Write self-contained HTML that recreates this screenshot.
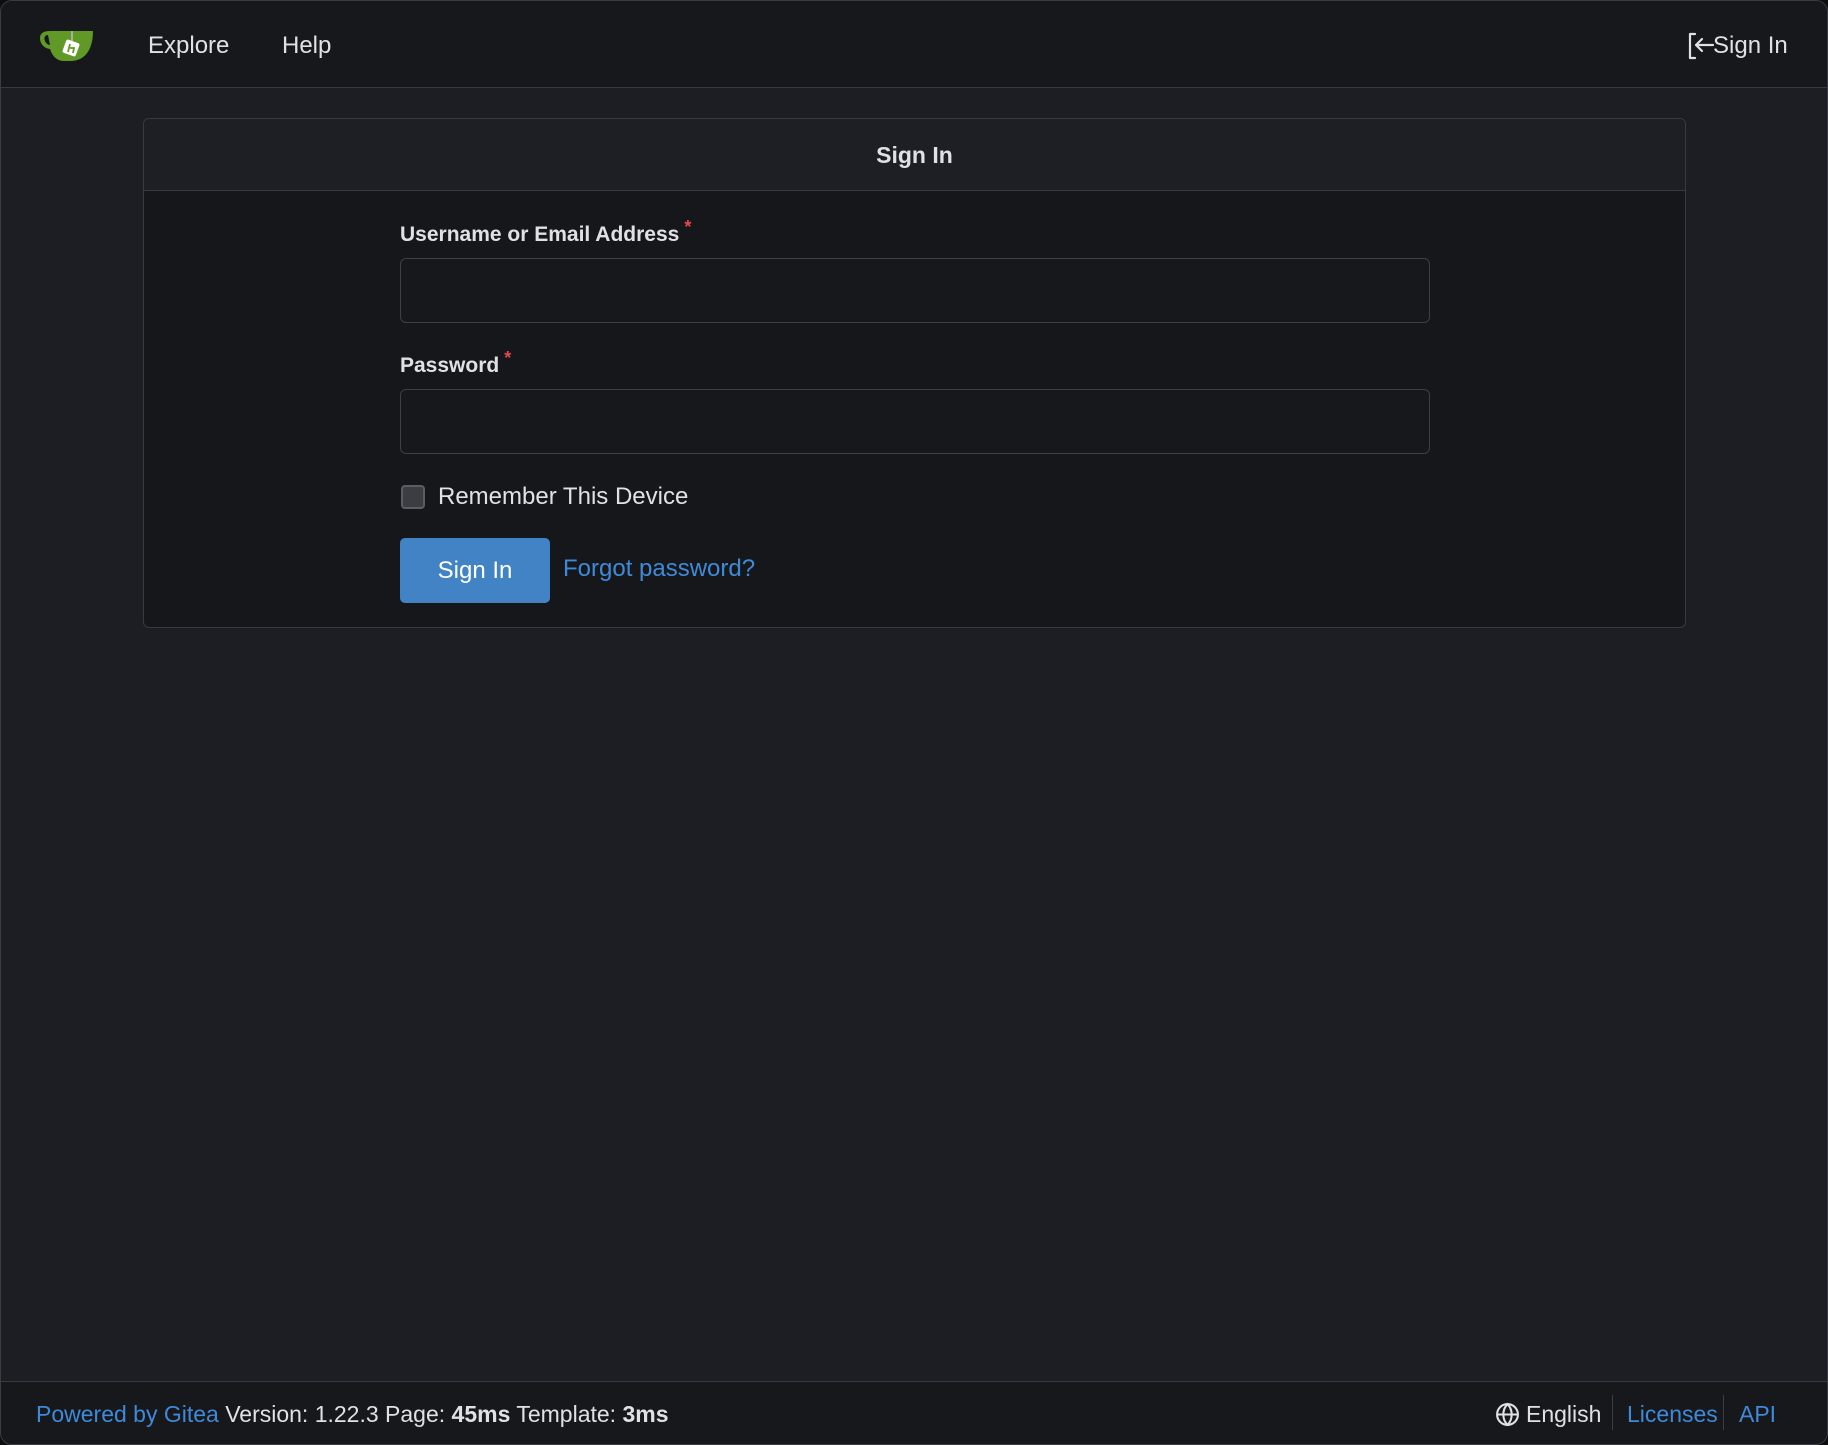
<!DOCTYPE html>
<html><head><meta charset="utf-8"><style>
html,body{margin:0;padding:0;width:1828px;height:1445px;background:#0d0e10;overflow:hidden}
*{box-sizing:border-box}
#win{position:absolute;left:0;top:0;width:1828px;height:1445px;background:#1c1e23;border:1px solid #3a3d44;border-radius:12px;overflow:hidden;font-family:"Liberation Sans",sans-serif;color:#dfe1e5}
#nav{position:absolute;left:0;top:0;right:0;height:87px;background:#17181c;border-bottom:1px solid #373a41}
.nl{position:absolute;top:31px;font-size:24px;color:#dfe1e5}
#card{position:absolute;left:142px;top:117px;width:1543px;height:510px;border:1px solid #373a41;border-radius:6px;background:#16171b;overflow:hidden}
#ch{height:72px;background:#1d1f24;border-bottom:1px solid #373a41;text-align:center;font-weight:bold;font-size:23px;line-height:72px}
.lbl{position:absolute;left:256px;font-weight:bold;font-size:21px}
.lbl span{color:#e5484d;position:relative;top:-8px;font-size:18px;margin-left:5px}
.inp{position:absolute;left:256px;width:1030px;height:65px;border:1px solid #3c3f46;border-radius:6px;background:#17181c}
#foot{position:absolute;left:0;right:0;top:1380px;bottom:0;background:#17181c;border-top:1px solid #373a41;font-size:23px}
a{color:#3f8ad8;text-decoration:none}
</style></head><body><div id="win">
<div id="nav">
<svg style="position:absolute;left:39px;top:26px" width="54" height="36" viewBox="0 0 54 36">
<path d="M10 4 H53 C53 20 47 34 30 34 H24 C16 34 12 28 10 22 C3 21 0 16 0 11 C0 6 4 4 10 4 Z M8 8 C4 8 4 12 5 14 C6 17 9 18 10 18 Z" fill="#609926" fill-rule="evenodd"/>
<line x1="32" y1="4" x2="32" y2="15" stroke="#bbb" stroke-width="1.5"/>
<rect x="24" y="14" width="14" height="14" rx="2" fill="#fff" transform="rotate(20 31 21)"/>
<path d="M28 25 L30 17 M30 21 L34 21 L33 26" stroke="#609926" stroke-width="1.8" fill="none"/>
</svg>
<div class="nl" style="left:147px">Explore</div>
<div class="nl" style="left:281px">Help</div>
<svg style="position:absolute;left:1686px;top:31px" width="28" height="28" viewBox="0 0 28 28" fill="none" stroke="#dfe1e5" stroke-width="2.2" stroke-linecap="round" stroke-linejoin="round"><path d="M8 2 H3 V26 H8"/><path d="M26 13 H9 M15 7 L9 13 L15 19"/></svg>
<div class="nl" style="left:1712px">Sign In</div>
</div>
<div id="card">
<div id="ch">Sign In</div>
<div class="lbl" style="top:104px">Username or Email Address<span>*</span></div>
<div class="inp" style="top:139px"></div>
<div class="lbl" style="top:235px">Password<span>*</span></div>
<div class="inp" style="top:270px"></div>
<div style="position:absolute;left:257px;top:366px;width:24px;height:24px;border:2px solid #5a5d63;border-radius:4px;background:#3b3d42"></div>
<div style="position:absolute;left:294px;top:364px;font-size:24px">Remember This Device</div>
<div style="position:absolute;left:256px;top:419px;width:150px;height:65px;background:#4183c4;border-radius:5px;color:#fff;font-size:24px;line-height:65px;text-align:center">Sign In</div>
<a style="position:absolute;left:419px;top:436px;font-size:24px">Forgot password?</a>
</div>
<div id="foot">
<div style="position:absolute;left:35px;top:19px"><a>Powered by Gitea</a> Version: 1.22.3 Page: <b>45ms</b> Template: <b>3ms</b></div>
<svg style="position:absolute;left:1494px;top:20px" width="25" height="25" viewBox="0 0 24 24" fill="none" stroke="#dfe1e5" stroke-width="2"><circle cx="12" cy="12" r="10"/><path d="M2 12h20M12 2c3 3 4 6.5 4 10s-1 7-4 10c-3-3-4-6.5-4-10s1-7 4-10z"/></svg>
<div style="position:absolute;left:1525px;top:19px">English</div>
<div style="position:absolute;left:1611px;top:13px;width:1px;height:35px;background:#3a3d44"></div>
<a style="position:absolute;left:1626px;top:19px">Licenses</a>
<div style="position:absolute;left:1722px;top:13px;width:1px;height:35px;background:#3a3d44"></div>
<a style="position:absolute;left:1738px;top:19px">API</a>
</div>
</div></body></html>
